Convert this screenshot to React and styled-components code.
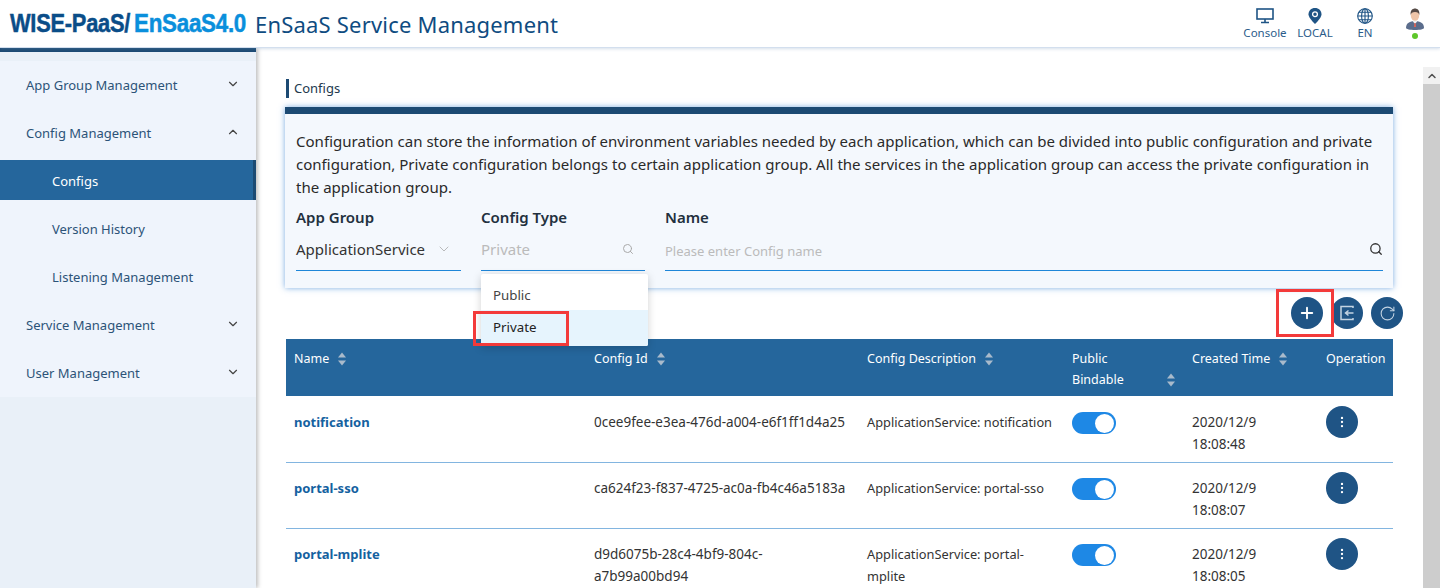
import React from 'react'
import styled, { createGlobalStyle } from 'styled-components'
import { ChevronDown, ChevronUp, Search, Plus, RotateCw, EllipsisVertical } from 'lucide-react'

const Global = createGlobalStyle`
html, body { margin: 0; padding: 0; height: 588px; overflow: hidden; background: #fff; }
* { box-sizing: border-box; }
body { font-family: "Noto Sans", "Open Sans", sans-serif; font-size: 13px; color: #333; }
`

const Page = styled.div`
width: 1440px;
height: 588px;
display: flex;
flex-direction: column;
overflow: hidden;
`

const Header = styled.header`
height: 48px;
flex: none;
display: flex;
align-items: center;
padding-left: 10px;
background: #fff;
border-bottom: 1px solid #d3dfee;
box-shadow: 0 1px 3px rgba(120,150,190,.3);
position: relative;
z-index: 3;
`

const Logo = styled.div`
display: flex;
flex: none;
font-family: "Liberation Sans", sans-serif;
font-weight: 700;
font-size: 26px;
letter-spacing: -0.3px;
width: 236px;
white-space: nowrap;
-webkit-text-stroke: 0.5px currentColor;
`
const LogoDark = styled.span`
color: #0a4d88;
display: inline-block;
transform: scaleX(0.84);
transform-origin: left center;
width: 124px;
`
const LogoLight = styled.span`
color: #0a8fdc;
display: inline-block;
transform: scaleX(0.86);
transform-origin: left center;
`

const Product = styled.div`
font-size: 22px;
color: #0f4c81;
margin-left: 9px;
letter-spacing: 0.2px;
`

const HeaderTools = styled.div`
margin-left: auto;
display: flex;
align-items: flex-start;
`
const Tool = styled.div`
width: ${p => p.$w}px;
display: flex;
flex-direction: column;
align-items: center;
font-size: 11.5px;
line-height: 14px;
color: #2b5c8a;
gap: 2px;
`
const Dot = styled.i`
width: 6px; height: 6px; border-radius: 50%; background: #5ec72a; margin-top: 1px;
`

const Body = styled.div`
flex: 1;
display: flex;
min-height: 0;
`

const Side = styled.aside`
width: 256px;
flex: none;
background: #e9f0f8;
border-top: 4px solid #1c4a73;
box-shadow: 2px 0 4px rgba(0,0,0,.25);
position: relative;
z-index: 2;
`
const Menu = styled.nav`
margin-top: 9px;
background: #eff4fc;
`
const MenuItem = styled.div`
height: ${p => p.$sub ? 40 : 48}px;
margin-bottom: ${p => p.$gap || 0}px;
display: flex;
align-items: center;
justify-content: space-between;
padding-left: ${p => p.$sub ? 52 : 26}px;
padding-right: 16px;
padding-top: ${p => p.$sub ? 2 : 0}px;
font-size: 13px;
color: ${p => p.$active ? '#fff' : '#2c5378'};
background: ${p => p.$active ? '#25669c' : 'transparent'};
border-right: ${p => p.$active ? '3px solid #1c4a73' : 'none'};
svg { margin-bottom: 3px; }
`

const Main = styled.main`
flex: 1;
display: flex;
min-width: 0;
`
const Content = styled.div`
flex: 1;
padding: 31px 30px 0 29px;
position: relative;
`

const Title = styled.h2`
margin: 0 0 9px 1px;
height: 19px;
font-size: 13px;
font-weight: 400;
line-height: 19px;
color: #22384e;
border-left: 3px solid #1c4a73;
padding-left: 5px;
`

const Panel = styled.section`
height: 181px;
background: #f4f8fd;
border-top: 7px solid #1c4a73;
box-shadow: 0 0 6px rgba(70,140,215,.7);
padding: 16px 10px 0 11px;
`
const Description = styled.p`
margin: 0 0 8px;
font-size: 15.05px;
line-height: 23px;
color: #2a2a2a;
`
const Filters = styled.div`
display: flex;
gap: 20px;
`
const Filter = styled.div`
width: ${p => p.$w ? p.$w + 'px' : 'auto'};
flex: ${p => p.$w ? 'none' : 1};
`
const FilterLabel = styled.div`
font-size: 15px;
font-weight: 600;
line-height: 20px;
color: #22303e;
margin-bottom: 9px;
`
const Field = styled.div`
height: 35px;
display: flex;
align-items: center;
justify-content: space-between;
border-bottom: 1px solid #1f86d8;
padding-bottom: 9px;
font-size: 15px;
color: ${p => p.$muted ? '#bbb' : '#333'};
`
const Placeholder = styled.span`
font-size: 13px;
color: #bbb;
padding-top: 4px;
`
const ToolBar = styled.div`
display: flex;
justify-content: flex-end;
gap: 8px;
margin: 9px -10px 10px 0;
height: 32px;
`
const RoundBtn = styled.button`
width: 32px;
height: 32px;
border: 0;
padding: 0;
border-radius: 50%;
background: #1f5485;
color: #fff;
display: flex;
align-items: center;
justify-content: center;
`

const Row = styled.div`
display: grid;
grid-template-columns: 300px 273px 205px 120px 134px 1fr;
margin-left: 1px;
`
const HeadRow = styled(Row)`
height: 57px;
background: #25669c;
color: #fff;
font-size: 12.5px;
`
const HeadCell = styled.div`
padding: 9px 8px 0;
line-height: 21px;
display: flex;
align-items: flex-start;
gap: 8px;
`
const BindHead = styled(HeadCell)`
justify-content: space-between;
`
const BindLabel = styled.span`
width: 60px;
`
const BindSort = styled.span`
margin-top: 21px;
`
const TableBody = styled.div`
padding-top: 1px;
`
const BodyRow = styled(Row)`
height: 66px;
border-bottom: 1px solid #82b5e0;
font-size: 13.5px;
color: #333;
`
const Cell = styled.div`
padding: 14px 8px 0;
line-height: 22px;
`
const NameCell = styled(Cell)`
font-size: 13px;
font-weight: 700;
color: #14619f;
`
const DescCell = styled(Cell)`
font-size: 12.8px;
`
const BindCell = styled.div`
padding: 15px 8px 0;
`
const Toggle = styled.div`
width: 44px;
height: 22px;
border-radius: 11px;
background: #1e88e5;
display: flex;
justify-content: flex-end;
align-items: center;
padding-right: 2px;
&::after {
  content: '';
  width: 19px;
  height: 19px;
  border-radius: 50%;
  background: #fff;
}
`
const OpCell = styled.div`padding: 9px 8px 0;`

const Dropdown = styled.ul`
position: absolute;
left: 225px;
top: 226px;
width: 167px;
height: 72px;
margin: 0;
padding: 0;
list-style: none;
background: #fff;
border-radius: 2px;
box-shadow: 0 2px 8px rgba(0,0,0,.18);
z-index: 4;
overflow: hidden;
`
const Option = styled.li`
height: 36px;
line-height: ${p => p.$on ? 34 : 36}px;
padding-left: 12px;
padding-top: ${p => p.$on ? 0 : 3}px;
font-size: 13.3px;
color: ${p => p.$on ? '#222' : '#444'};
background: ${p => p.$on ? '#e6f4fd' : 'transparent'};
`
const Callout = styled.div`
position: absolute;
left: ${p => p.$x}px;
top: ${p => p.$y}px;
width: ${p => p.$w}px;
height: ${p => p.$h}px;
border: 3px solid #f33a3a;
z-index: 5;
pointer-events: none;
`

const ScrollTrack = styled.div`
width: 17px;
flex: none;
margin-top: 19px;
display: flex;
flex-direction: column;
`
const ScrollUp = styled.div`
height: 17px;
background: #f1f1f1;
display: flex;
align-items: center;
justify-content: center;
`
const ScrollThumb = styled.div`
flex: 1;
background: #cdcdcd;
`

const SortIcon = styled.svg`
margin-top: 4px;
flex: none;
`
const Sort = () => (
  <SortIcon width="10" height="14" viewBox="0 0 10 14">
    <path d="M5 0.5 9 5.5H1Z" fill="#a9bacb" />
    <path d="M5 13.5 9 8.5H1Z" fill="#a9bacb" />
  </SortIcon>
)

const Monitor = () => (
  <svg width="18" height="16" viewBox="0 0 18 16" fill="none" stroke="#1f5485">
    <rect x="1" y="1" width="16" height="10" strokeWidth="1.6" />
    <path d="M9 11v3M5 14.5h8" strokeWidth="1.6" />
  </svg>
)
const Pin = () => (
  <svg width="16" height="16" viewBox="0 0 14 16">
    <path d="M7 0C3.2 0 .5 2.7.5 6.2.5 10 7 16 7 16s6.500-6 6.500-9.800C13.500 2.700 10.800 0 7 0Z" fill="#1f5485" />
    <circle cx="7" cy="6.200" r="2.400" fill="none" stroke="#fff" strokeWidth="1.300" />
  </svg>
)
const Globe = () => (
  <svg width="16" height="16" viewBox="0 0 16 16" fill="none" stroke="#1f5485" strokeWidth="1.100">
    <circle cx="8" cy="8" r="7.300" />
    <ellipse cx="8" cy="8" rx="3.400" ry="7.300" />
    <path d="M8 .7v14.600M.7 8h14.600M1.700 4.300h12.600M1.700 11.700h12.600" />
  </svg>
)
const Avatar = () => (
  <svg width="18" height="22" viewBox="0 0 18 22">
    <path d="M0 20c0-5 4-7 9-7s9 2 9 7c0 1-4 2-9 2s-9-1-9-2Z" fill="#5b6d8c" />
    <path d="M6.500 13 9 16l2.500-3Z" fill="#f3f3f3" />
    <path d="M8.400 15h1.200l.5 4H7.900Z" fill="#d9655a" />
    <ellipse cx="9" cy="7.500" rx="4.200" ry="5.200" fill="#eec5a8" />
    <path d="M4.700 7C4 2.500 6.500.5 9 .5s5 2 4.300 6.500c-.5-2-1.500-3-4.300-3S5.200 5 4.700 7Z" fill="#554a45" />
  </svg>
)
const ExportGlyph = () => (
  <svg width="16" height="16" viewBox="0 0 16 16" fill="none" stroke="#c3d3e2" strokeWidth="1.500">
    <path d="M14 3V1.500H2v13h12V13" />
    <path d="M14.500 8H6.500M9.500 5.500 6.500 8l3 2.500" />
  </svg>
)

const rows = [
  { name: 'notification', id: '0cee9fee-e3ea-476d-a004-e6f1ff1d4a25', desc: 'ApplicationService: notification', date: '2020/12/9', time: '18:08:48' },
  { name: 'portal-sso', id: 'ca624f23-f837-4725-ac0a-fb4c46a5183a', desc: 'ApplicationService: portal-sso', date: '2020/12/9', time: '18:08:07' },
  { name: 'portal-mplite', id: 'd9d6075b-28c4-4bf9-804c-a7b99a00bd94', desc: 'ApplicationService: portal-mplite', date: '2020/12/9', time: '18:08:05' },
]

const App = () => (
  <Page>
    <Global />
    <Header>
      <Logo><LogoDark>WISE-PaaS/</LogoDark><LogoLight>EnSaaS4.0</LogoLight></Logo>
      <Product>EnSaaS Service Management</Product>
      <HeaderTools>
        <Tool $w={50}><Monitor />Console</Tool>
        <Tool $w={50}><Pin />LOCAL</Tool>
        <Tool $w={50}><Globe />EN</Tool>
        <Tool $w={50}><Avatar /><Dot /></Tool>
      </HeaderTools>
    </Header>
    <Body>
      <Side>
        <Menu>
          <MenuItem>App Group Management<ChevronDown size={14} color="#444" /></MenuItem>
          <MenuItem $gap={3}>Config Management<ChevronUp size={14} color="#444" /></MenuItem>
          <MenuItem $sub $active $gap={8}>Configs</MenuItem>
          <MenuItem $sub $gap={8}>Version History</MenuItem>
          <MenuItem $sub $gap={5}>Listening Management</MenuItem>
          <MenuItem>Service Management<ChevronDown size={14} color="#444" /></MenuItem>
          <MenuItem>User Management<ChevronDown size={14} color="#444" /></MenuItem>
        </Menu>
      </Side>
      <Main>
        <Content>
          <Title>Configs</Title>
          <Panel>
            <Description>
              Configuration can store the information of environment variables needed by each application, which can be divided into public configuration and private configuration, Private configuration belongs to certain application group. All the services in the application group can access the private configuration in the application group.
            </Description>
            <Filters>
              <Filter $w={165}>
                <FilterLabel>App Group</FilterLabel>
                <Field>ApplicationService<ChevronDown size={16} color="#aaa" strokeWidth={1.2} style={{ marginRight: 9 }} /></Field>
              </Filter>
              <Filter $w={164}>
                <FilterLabel>Config Type</FilterLabel>
                <Field $muted>Private<Search size={12} color="#aaa" style={{ marginRight: 11 }} /></Field>
              </Filter>
              <Filter>
                <FilterLabel>Name</FilterLabel>
                <Field><Placeholder>Please enter Config name</Placeholder><Search size={14} color="#333" strokeWidth={2.2} /></Field>
              </Filter>
            </Filters>
          </Panel>
          <ToolBar>
            <RoundBtn><Plus size={18} strokeWidth={2.5} /></RoundBtn>
            <RoundBtn><ExportGlyph /></RoundBtn>
            <RoundBtn><RotateCw size={17} color="#c3d3e2" strokeWidth={1.5} /></RoundBtn>
          </ToolBar>
          <HeadRow>
            <HeadCell>Name<Sort /></HeadCell>
            <HeadCell>Config Id<Sort /></HeadCell>
            <HeadCell>Config Description<Sort /></HeadCell>
            <BindHead>
              <BindLabel>Public Bindable</BindLabel>
              <BindSort><Sort /></BindSort>
            </BindHead>
            <HeadCell>Created Time<Sort /></HeadCell>
            <HeadCell>Operation</HeadCell>
          </HeadRow>
          <TableBody>
            {rows.map(r => (
              <BodyRow key={r.id}>
                <NameCell>{r.name}</NameCell>
                <Cell>{r.id}</Cell>
                <DescCell>{r.desc}</DescCell>
                <BindCell><Toggle /></BindCell>
                <Cell>{r.date}<br />{r.time}</Cell>
                <OpCell><RoundBtn><EllipsisVertical size={14} /></RoundBtn></OpCell>
              </BodyRow>
            ))}
          </TableBody>
          <Dropdown>
            <Option>Public</Option>
            <Option $on>Private</Option>
          </Dropdown>
          <Callout $x={217} $y={263} $w={96} $h={35} />
          <Callout $x={1020} $y={241} $w={58} $h={48} />
        </Content>
        <ScrollTrack>
          <ScrollUp><ChevronUp size={12} color="#505050" strokeWidth={3} /></ScrollUp>
          <ScrollThumb />
        </ScrollTrack>
      </Main>
    </Body>
  </Page>
)

export default App
